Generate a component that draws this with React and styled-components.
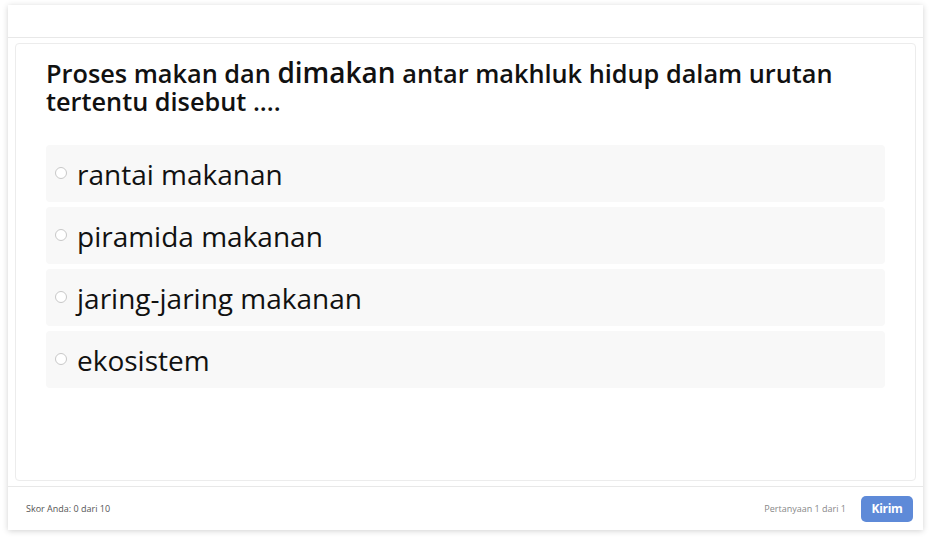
import React from 'react';
import styled, { createGlobalStyle } from 'styled-components';

const GlobalStyle = createGlobalStyle`
  html, body { margin: 0; padding: 0; background: #fff; }
  body { font-family: "Open Sans", "Noto Sans", sans-serif; }
  * { box-sizing: border-box; }
`;

const Page = styled.div`
  padding: 5px 8px 11px 8px;
  height: 541px;
`;

const Card = styled.div`
  height: 525px;
  background: #fff;
  box-shadow: 0 1px 6px rgba(0, 0, 0, 0.18);
  display: flex;
  flex-direction: column;
`;

const Header = styled.div`
  height: 33px;
  border-bottom: 1px solid #e8e8e8;
`;

const Body = styled.div`
  flex: 1;
  padding: 5px 7px 5px 7px;
  display: flex;
`;

const QuestionBox = styled.div`
  flex: 1;
  border: 1px solid #ececec;
  border-radius: 4px;
  padding: 14px 30px 20px 30px;
`;

const Question = styled.h2`
  margin: 0 0 30px 0;
  font-size: 25.3px;
  font-weight: 600;
  line-height: 28px;
  color: #111;
  padding-right: 20px;
`;

const Big = styled.span`
  font-size: 28px;
  line-height: 1;
`;

const Options = styled.div`
  display: flex;
  flex-direction: column;
  gap: 5px;
`;

const Option = styled.label`
  display: flex;
  align-items: center;
  height: 57px;
  background: #f8f8f8;
  border-radius: 4px;
  padding: 0 10px 0 9px;
  font-size: 28px;
  color: #111;
  cursor: pointer;
`;

const Radio = styled.span`
  width: 12px;
  height: 12px;
  border: 1px solid #c8c8c8;
  border-radius: 50%;
  background: #fff;
  margin-right: 10px;
  flex-shrink: 0;
  position: relative;
  top: -1px;
`;

const Footer = styled.div`
  height: 44px;
  border-top: 1px solid #e8e8e8;
  display: flex;
  align-items: center;
  padding: 0 10px 0 18px;
  font-size: 9px;
`;

const Score = styled.span`
  color: #555;
  flex: 1;
`;

const Counter = styled.span`
  color: #888;
  margin-right: 15px;
`;

const SubmitButton = styled.button`
  background: #5e8ad8;
  color: #fff;
  border: none;
  border-radius: 5px;
  width: 52px;
  height: 26px;
  font-family: "Open Sans", sans-serif;
  font-weight: 700;
  font-size: 12px;
  letter-spacing: -0.3px;
`;

const answers = ['rantai makanan', 'piramida makanan', 'jaring-jaring makanan', 'ekosistem'];

export default function App() {
  return (
    <>
      <GlobalStyle />
      <Page>
        <Card>
          <Header />
          <Body>
            <QuestionBox>
              <Question>
                Proses makan dan <Big>dimakan</Big> antar makhluk hidup dalam urutan tertentu disebut ....
              </Question>
              <Options>
                {answers.map((a) => (
                  <Option key={a}>
                    <Radio />
                    {a}
                  </Option>
                ))}
              </Options>
            </QuestionBox>
          </Body>
          <Footer>
            <Score>Skor Anda: 0 dari 10</Score>
            <Counter>Pertanyaan 1 dari 1</Counter>
            <SubmitButton>Kirim</SubmitButton>
          </Footer>
        </Card>
      </Page>
    </>
  );
}
